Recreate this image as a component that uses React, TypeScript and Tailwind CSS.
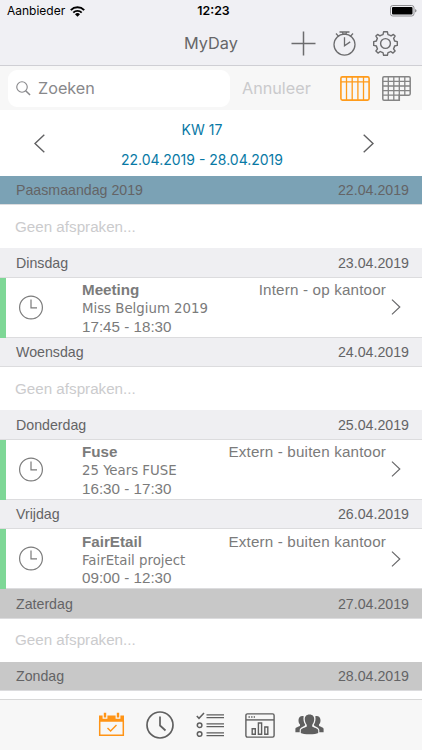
import React from 'react';

type Appointment = { title: string; subject: string; time: string; place: string };
type Day = { name: string; date: string; tone?: string; appointment?: Appointment };

const days: Day[] = [
  { name: 'Paasmaandag 2019', date: '22.04.2019', tone: 'holiday' },
  {
    name: 'Dinsdag',
    date: '23.04.2019',
    appointment: { title: 'Meeting', subject: 'Miss Belgium 2019', time: '17:45 - 18:30', place: 'Intern - op kantoor' },
  },
  { name: 'Woensdag', date: '24.04.2019' },
  {
    name: 'Donderdag',
    date: '25.04.2019',
    appointment: { title: 'Fuse', subject: '25 Years FUSE', time: '16:30 - 17:30', place: 'Extern - buiten kantoor' },
  },
  {
    name: 'Vrijdag',
    date: '26.04.2019',
    appointment: { title: 'FairEtail', subject: 'FairEtail project', time: '09:00 - 12:30', place: 'Extern - buiten kantoor' },
  },
  { name: 'Zaterdag', date: '27.04.2019', tone: 'weekend' },
];

const Chevron: React.FC<{ className: string; flip?: boolean }> = ({ className, flip }) => (
  <svg className={className} viewBox="0 0 11 19" fill="none" stroke="currentColor" strokeWidth="1.4">
    <path d={flip ? 'M10.3 0.7 L1 9.5 L10.3 18.3' : 'M0.7 0.7 L10 9.5 L0.7 18.3'} />
  </svg>
);

const StatusBar = () => (
  <div className="grid h-[22px] grid-cols-3 items-center pl-[7px] pr-[5px] text-black">
    <div className="flex items-center gap-[5px]">
      <span className="text-[12px] leading-none">Aanbieder</span>
      <svg className="h-[11px] w-[15px]" viewBox="0 0 15 11">
        <path d="M0.8 4.1 A9.5 9.5 0 0 1 14.2 4.1" fill="none" stroke="#000" strokeWidth="2" />
        <path d="M3.3 6.6 A6 6 0 0 1 11.7 6.6" fill="none" stroke="#000" strokeWidth="1.9" />
        <path d="M7.5 10.8 L5 8.2 A3.6 3.6 0 0 1 10 8.2 Z" />
      </svg>
    </div>
    <span className="pl-[3px] text-center text-[12.3px] font-semibold leading-none">12:23</span>
    <svg className="h-[12px] w-[27px] justify-self-end" viewBox="0 0 27 12">
      <rect x="0.5" y="0.5" width="23.5" height="10.5" rx="2.3" fill="none" stroke="#8f8f92" />
      <rect x="2" y="2" width="20.5" height="7.5" rx="1" />
      <path d="M25 4 Q26.6 4.5 26.6 5.8 Q26.6 7.1 25 7.6 Z" fill="#8f8f92" />
    </svg>
  </div>
);

const TitleBar = () => (
  <div className="grid h-[42px] grid-cols-3 items-center text-[#6c6c6e]">
    <span />
    <h1 className="text-center text-[16.3px] leading-none text-[#666668]">MyDay</h1>
    <div className="flex items-center justify-end gap-[17px] pr-[24px]">
      <svg className="h-[25px] w-[25px]" viewBox="0 0 25 25" stroke="currentColor" strokeWidth="1.5">
        <path d="M12.5 0.5 V24.5 M0.5 12.5 H24.5" />
      </svg>
      <svg className="h-[25px] w-[23px]" viewBox="0 0 23 25" fill="none" stroke="currentColor" strokeWidth="1.3">
        <circle cx="11.5" cy="13.6" r="10.5" />
        <path d="M6.5 1 H16.5 M9.2 1 L10.2 3.2 H12.8 L13.8 1 M3 2.5 L5.6 5.4 M20 2.5 L17.4 5.4 M11.5 6.3 V14.8 L17.2 10.9" />
      </svg>
      <svg className="h-[25px] w-[25px]" viewBox="0 0 25 25" fill="none" stroke="currentColor" strokeWidth="1.4" strokeLinejoin="round">
        <path
          d="M10.6 0.8 H14.4 L15 3.6 Q16.7 4 18.1 4.9 L20.4 3.4 L22.1 5.1 L20.6 7.4 Q21.3 8.7 21.6 10 L24.3 10.6 V14.4 L21.6 15 Q21.3 16.6 20.5 17.8 L22.1 20 L20 22.1 L17.8 20.5 Q16.5 21.3 15 21.6 L14.4 24.3 H10.6 L10 21.6 Q8.5 21.3 7.2 20.5 L5 22.1 L2.9 20 L4.5 17.8 Q3.7 16.5 3.4 15 L0.7 14.4 V10.6 L3.4 10 Q3.7 8.6 4.4 7.4 L2.9 5.1 L4.6 3.4 L6.9 4.9 Q8.3 4 10 3.6 Z"
        />
        <circle cx="12.5" cy="12.5" r="4.9" />
      </svg>
    </div>
  </div>
);

const SearchRow = () => (
  <div className="flex h-[44px] items-center bg-[#f7f7f7] pl-[8px] pr-[11px]">
    <div className="flex h-[37px] w-[222px] items-center gap-[7px] rounded-[9px] bg-white pl-[8px] text-[#88888b]">
      <svg className="h-[15px] w-[15px]" viewBox="0 0 16 16" fill="none" stroke="currentColor" strokeWidth="1.2">
        <circle cx="6.4" cy="6.4" r="5.6" />
        <path d="M10.3 10.3 L15 15" strokeWidth="1.6" />
      </svg>
      <span className="text-[16.2px] leading-none">Zoeken</span>
    </div>
    <span className="ml-[12px] text-[16.2px] leading-none text-[#cacacc]">Annuleer</span>
    <div className="ml-auto flex gap-[12px]">
      <svg className="h-[25px] w-[30px] text-[#ff9b1a]" viewBox="0 0 30 25" fill="none" stroke="currentColor" strokeWidth="1.3">
        <rect x="0.9" y="0.9" width="28.2" height="23.2" rx="1.5" strokeWidth="1.6" />
        <path d="M1 5.8 H29 M6.5 1 V24 M12.2 1 V24 M17.9 1 V24 M23.5 1 V24" />
      </svg>
      <svg className="h-[25px] w-[29px] text-[#858585]" viewBox="0 0 29 25" fill="none" stroke="currentColor" strokeWidth="1.3">
        <path d="M2 0.8 H27 Q28.2 0.8 28.2 2 V17.8 Q28.2 19.2 27 19.2 H17.3 V24.2 H2 Q0.8 24.2 0.8 23 V2 Q0.8 0.8 2 0.8 Z" strokeWidth="1.5" />
        <path d="M1 5.3 H28 M1 10 H28 M1 14.6 H28 M1 19.2 H18 M6.3 1 V24 M11.8 1 V24 M17.3 1 V24 M22.8 1 V19" />
      </svg>
    </div>
  </div>
);

const WeekPicker = () => (
  <div className="flex h-[66px] items-center justify-between pl-[34px] pr-[48px] text-[#606062]">
    <Chevron className="h-[19px] w-[11px]" flip />
    <div className="mr-[4px] flex flex-col items-center pt-[4px] text-[14px] leading-[30px] text-[#0879a5]">
      <span>KW 17</span>
      <span>22.04.2019 - 28.04.2019</span>
    </div>
    <Chevron className="h-[19px] w-[11px]" />
  </div>
);

const DayHeader: React.FC<{ day: Day }> = ({ day }) => (
  <div
    className={`flex h-[29.2px] items-center justify-between border-b border-[#dcdcde] pl-[16px] pr-[13px] pt-[1.4px] font-['Liberation_Sans',sans-serif] text-[14.2px] text-[#646466] ${
      day.tone === 'holiday' ? 'bg-[#7ba2b5]' : day.tone === 'weekend' ? 'bg-[#c8c8c8]' : 'bg-[#efeff2]'
    }`}
  >
    <span>{day.name}</span>
    <span>{day.date}</span>
  </div>
);

const AppointmentRow: React.FC<{ item: Appointment }> = ({ item }) => (
  <div className="flex h-[60.3px] bg-[#7ed796] pl-[6px] font-['Liberation_Sans',sans-serif] text-[15.2px] leading-[18.4px] text-[#7b7b7b]">
    <div className="flex flex-1 border-b border-[#dcdcde] bg-white pl-[13px] pr-[21px]">
      <svg className="mt-[17px] h-[25px] w-[24px]" viewBox="0 0 24 25" fill="none" stroke="currentColor" strokeWidth="1.2">
        <circle cx="12" cy="12.5" r="11.4" />
        <path d="M12 4.5 V12.8 H18" />
      </svg>
      <div className="ml-[39px] pt-[3.4px]">
        <p className="font-bold">{item.title}</p>
        <p className="font-['DejaVu_Sans_Condensed','Noto_Sans',sans-serif] text-[14.8px]">{item.subject}</p>
        <p>{item.time}</p>
      </div>
      <div className="ml-auto flex flex-col items-end pt-[3.4px]">
        <span className="mr-[15px] tracking-[0.17px]">{item.place}</span>
        <Chevron className="h-[16px] w-[10px] text-[#68686a]" />
      </div>
    </div>
  </div>
);

const TabBar = () => (
  <nav className="flex h-[51px] items-center justify-center gap-[21.5px] border-t border-[#d8d8d8] bg-[#f7f7f7] text-[#5f5f5f]">
    <svg className="mb-[2px] h-[25px] w-[27px] text-[#ff9416]" viewBox="0 0 27 25">
      <path d="M1.7 9 V23.2 H25.3 V9" fill="none" stroke="currentColor" strokeWidth="1.5" />
      <path d="M1 3.4 H4.6 V6.8 H9.4 V3.4 H17.6 V6.8 H22.4 V3.4 H26 V9.8 H1 Z" fill="currentColor" />
      <path d="M5.8 0.8 H8.2 V5.6 H5.8 Z M18.8 0.8 H21.2 V5.6 H18.8 Z" fill="currentColor" />
      <path d="M9.5 16 L12.6 19 L18.5 13" fill="none" stroke="currentColor" strokeWidth="1.4" />
    </svg>
    <svg className="h-[28px] w-[28px]" viewBox="0 0 28 28" fill="none" stroke="currentColor" strokeWidth="1.7">
      <circle cx="14" cy="14" r="13" />
      <path d="M14 5.5 V14.5 L19.5 19.5" />
    </svg>
    <svg className="h-[26px] w-[28px]" viewBox="0 0 28 26" fill="none" stroke="currentColor" strokeWidth="1.3">
      <path d="M0.8 4 L3 6.3 L8 1" strokeWidth="1.5" />
      <circle cx="3.6" cy="13.2" r="2.3" strokeWidth="1.5" />
      <circle cx="3.6" cy="22" r="2.3" strokeWidth="1.5" />
      <path d="M10.5 2.8 H28 M10.5 5.6 H28 M10.5 11.9 H28 M10.5 14.7 H28 M10.5 20.8 H28 M10.5 23.6 H28" />
    </svg>
    <svg className="h-[25px] w-[30px]" viewBox="0 0 30 25" fill="none" stroke="currentColor" strokeWidth="1.4">
      <rect x="0.9" y="0.9" width="28.2" height="23.2" rx="1.5" />
      <path d="M1 6.9 H29" />
      <path d="M3.5 4 H10" strokeDasharray="1.4 1.2" />
      <path d="M7.2 15.7 H10.3 V21.3 H7.2 Z M13.4 10 H16.6 V21.3 H13.4 Z M19.8 14 H22.8 V21.3 H19.8 Z" />
    </svg>
    <svg className="mb-[2px] ml-[-1.5px] h-[21px] w-[29px]" viewBox="0 0 29 21" fill="currentColor">
      <path d="M14.5 0.5 C17.8 0.5 19.4 2.7 19.2 5.6 C19 8.5 17.8 10 17.2 10.9 V12.4 C18.7 13.7 23 14 23.2 16.2 V19 C21 20.7 8 20.7 5.8 19 V16.2 C6 14 10.3 13.7 11.8 12.4 V10.9 C11.2 10 10 8.5 9.8 5.6 C9.6 2.7 11.2 0.5 14.5 0.5 Z" />
      <path d="M8.7 2.2 C8.1 4.4 8.5 8.4 10.2 10.8 C9.8 12.6 5 13.3 4.7 16 V18.3 H0.4 V15 C0.6 13.2 3.5 13 5 11.8 V10.5 C3.7 9.3 3.5 7.8 3.5 6 C3.5 3.2 6 1.4 8.7 2.2 Z" />
      <path d="M20.3 2.2 C20.9 4.4 20.5 8.4 18.8 10.8 C19.2 12.6 24 13.3 24.3 16 V18.3 H28.6 V15 C28.4 13.2 25.5 13 24 11.8 V10.5 C25.3 9.3 25.5 7.8 25.5 6 C25.5 3.2 23 1.4 20.3 2.2 Z" />
    </svg>
  </nav>
);

const App: React.FC = () => (
  <div className="flex h-[750px] w-[422px] flex-col overflow-hidden bg-white font-['Inter',sans-serif]">
    <header className="h-[66px] border-b border-[#cfcfd4] bg-[#f0f0f4]">
      <StatusBar />
      <TitleBar />
    </header>
    <SearchRow />
    <WeekPicker />
    <main className="min-h-0 flex-1 overflow-hidden">
      {days.map(day => (
        <section key={day.date}>
          <DayHeader day={day} />
          {day.appointment ? (
            <AppointmentRow item={day.appointment} />
          ) : (
            <div className="flex h-[43.3px] items-center pl-[15px] pt-[1px] font-['Liberation_Sans',sans-serif] text-[15.2px] text-[#cbcbcd]">
              Geen afspraken...
            </div>
          )}
        </section>
      ))}
      <DayHeader day={{ name: 'Zondag', date: '28.04.2019', tone: 'weekend' }} />
    </main>
    <TabBar />
  </div>
);

export default App;
